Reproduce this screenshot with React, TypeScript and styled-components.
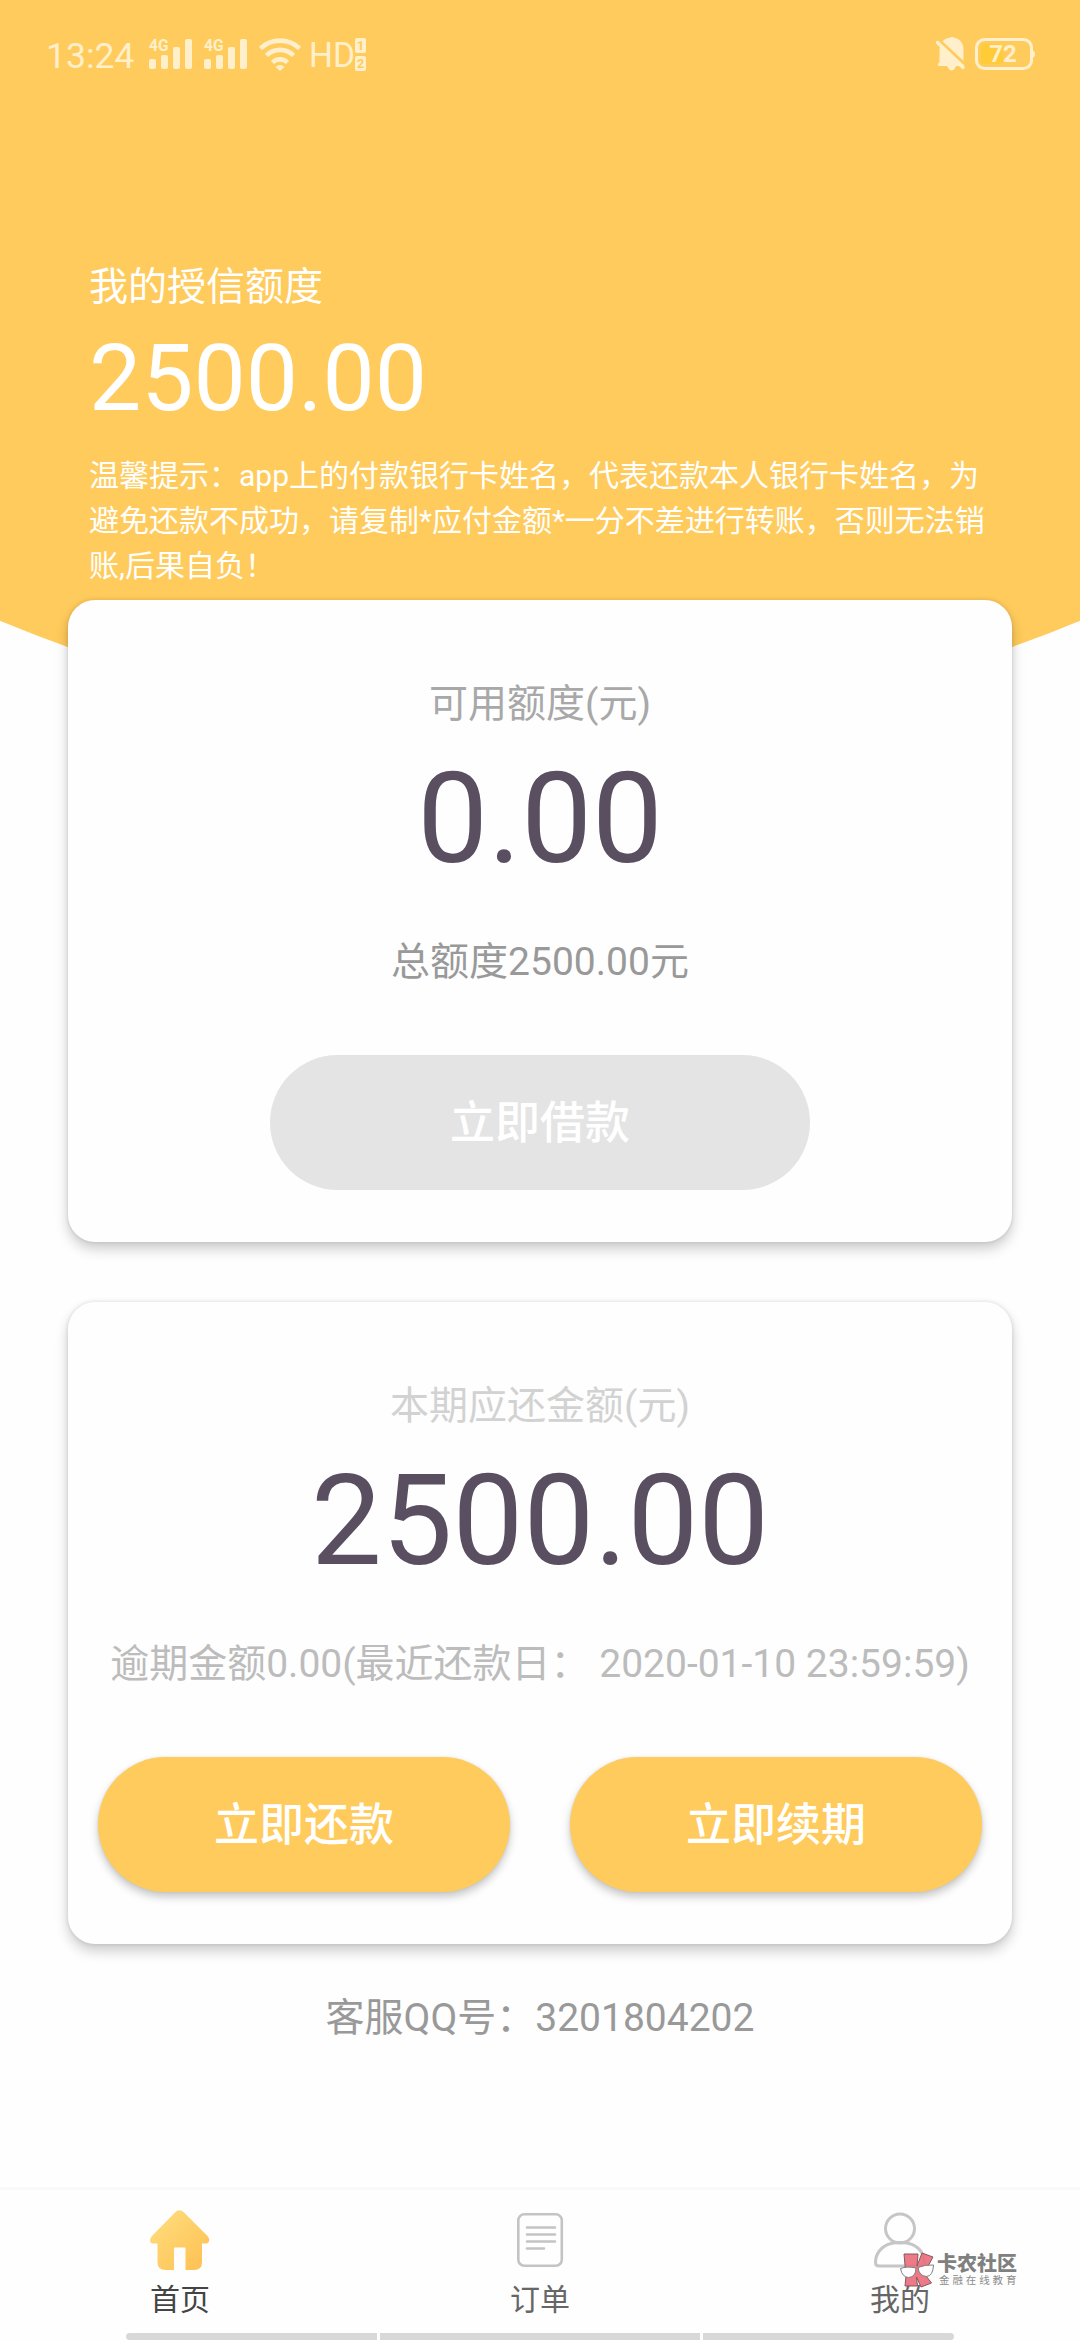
import React from 'react';
import styled, { createGlobalStyle } from 'styled-components';

const Global = createGlobalStyle`
  * { box-sizing: border-box; }
  html, body { margin: 0; padding: 0; background: #fefefe; }
  body { font-family: Roboto, "Noto Sans CJK SC", sans-serif; overflow: hidden; }
`;

const Screen = styled.div`
  width: 1080px;
  height: 2340px;
  display: flex;
  flex-direction: column;
  background: #fefefe;
  overflow: hidden;
`;

const Hero = styled.header`
  flex: none;
  height: 729px;
  background: #ffcb5c;
  clip-path: circle(1400px at 50% -671px);
  color: #fff;
`;

const StatusBar = styled.div`
  display: flex;
  justify-content: space-between;
  height: 106px;
  padding: 0 45px 0 46px;
  color: #fff0cb;
`;

const StatusGroup = styled.div`
  display: flex;
  align-items: flex-start;
`;

const Clock = styled.span`
  width: 90px;
  margin-top: 35px;
  font-size: 35.5px;
  line-height: 42px;
  white-space: nowrap;
`;

const StatusIcons = styled.svg`
  display: block;
  flex: none;
`;

const HeroBody = styled.div`
  padding: 152px 89px 0;
`;

const HeroLabel = styled.div`
  font-size: 39px;
  line-height: 58px;
`;

const HeroAmount = styled.div`
  font-size: 93px;
  line-height: 109px;
  margin-top: 8px;
`;

const HeroTip = styled.p`
  margin: 20px 0 0;
  width: 905px;
  font-size: 30px;
  line-height: 45px;
`;

const Main = styled.main`
  position: relative;
  flex: 1;
  display: flex;
  flex-direction: column;
  gap: 60px;
  margin-top: -129px;
  padding: 0 68px;
`;

const Card = styled.section`
  height: 642px;
  flex: none;
  display: flex;
  flex-direction: column;
  align-items: center;
  padding-top: 75px;
  border-radius: 27px;
  background: #fefefe;
  box-shadow: 0 7px 13px rgba(0, 0, 0, 0.2), 0 0 4px rgba(0, 0, 0, 0.12);
`;

const CardTitle = styled.h2<{ $color: string }>`
  margin: 0;
  font-size: 39px;
  font-weight: 400;
  line-height: 58px;
  color: ${(p) => p.$color};
`;

const CardAmount = styled.div`
  margin-top: 11px;
  font-size: 126px;
  line-height: 151px;
  color: #594f61;
`;

const CardNote = styled.div<{ $color: string }>`
  margin-top: 38px;
  font-size: 39px;
  line-height: 58px;
  white-space: pre;
  color: ${(p) => p.$color};
`;

const Actions = styled.div`
  display: flex;
  gap: 60px;
  margin-top: 64px;
`;

const PillButton = styled.button<{ $width: number; $disabled?: boolean }>`
  width: ${(p) => p.$width}px;
  height: 135px;
  padding: 3px 0 0;
  border: 0;
  border-radius: 68px;
  background: ${(p) => (p.$disabled ? '#e4e4e4' : '#ffcb5c')};
  box-shadow: ${(p) =>
    p.$disabled ? 'none' : '0 5px 8px rgba(0, 0, 0, 0.22), 0 0 3px rgba(0, 0, 0, 0.08)'};
  color: #fff;
  font: 500 45px/66px Roboto, "Noto Sans CJK SC", sans-serif;
`;

const Support = styled.div`
  margin-top: -15px;
  text-align: center;
  font-size: 39px;
  line-height: 58px;
  color: #999;
`;

const TabBar = styled.nav`
  position: relative;
  flex: none;
  height: 153px;
  display: grid;
  grid-template-columns: repeat(3, 1fr);
  border-top: 3px solid #f9f9f9;
`;

const Tab = styled.div<{ $active?: boolean }>`
  display: flex;
  flex-direction: column;
  align-items: center;
  padding-top: 17px;
  font-size: 30px;
  line-height: 44px;
  color: ${(p) => (p.$active ? '#444' : '#666')};
`;

const TabIcon = styled.svg`
  display: block;
  margin-bottom: 5px;
`;

const GestureBar = styled.div`
  position: absolute;
  left: 126px;
  bottom: 0;
  width: 828px;
  height: 7px;
  display: flex;
  gap: 3px;
  border-radius: 4px;
  overflow: hidden;
`;

const GestureSegment = styled.span<{ $grow: number }>`
  flex: ${(p) => p.$grow} 1 0;
  background: #d8d8d8;
`;

const Watermark = styled.div`
  position: absolute;
  left: 899px;
  top: 61px;
  display: flex;
  align-items: flex-start;
  gap: 2px;
`;

const WatermarkText = styled.div`
  display: flex;
  flex-direction: column;
  padding-top: 2px;
  white-space: nowrap;
`;

const WatermarkName = styled.span`
  font-size: 20px;
  font-weight: 900;
  line-height: 22px;
  color: #808080;
`;

const WatermarkSlogan = styled.span`
  padding-left: 2px;
  font-size: 10.5px;
  line-height: 12px;
  letter-spacing: 2.9px;
  color: #8c8c8c;
`;

function SignalBars({ x }: { x: number }) {
  return (
    <g transform={`translate(${x} 0)`}>
      <text x="0" y="51" fontSize="16" fontWeight="700" textLength="19.5" lengthAdjust="spacingAndGlyphs">4G</text>
      <rect x="0" y="59" width="7" height="10" rx="2" />
      <rect x="12" y="55" width="7" height="14" rx="2" />
      <rect x="24" y="47" width="7" height="22" rx="2" />
      <rect x="36" y="39" width="7" height="30" rx="2" />
    </g>
  );
}

function ConnectivityIcons() {
  return (
    <StatusIcons width="236" height="90" viewBox="136 0 236 90" fill="currentColor" fontFamily="Roboto">
      <SignalBars x={149} />
      <SignalBars x={204} />
      <g fill="none" stroke="currentColor" strokeWidth="4.6">
        <path d="M260.500 48.500A28 28 0 0 1 299.500 48.500" />
        <path d="M266.500 55.500A19 19 0 0 1 293.500 55.500" />
        <path d="M272.500 62.500A10.500 10.500 0 0 1 287.500 62.500" />
      </g>
      <path d="M275.500 67q4.500-4 9 0l-4.500 4z" />
      <text x="309" y="67" fontSize="35.500" textLength="46" lengthAdjust="spacingAndGlyphs">HD</text>
      <rect x="355" y="38" width="11" height="15" rx="2" />
      <rect x="355" y="56" width="11" height="15" rx="2" />
      <g fill="#ffcb5c" fontSize="12.500" fontWeight="700" textAnchor="middle">
        <text x="360.500" y="50">1</text>
        <text x="360.500" y="68">2</text>
      </g>
    </StatusIcons>
  );
}

function AlertAndBattery() {
  return (
    <StatusIcons width="100" height="90" viewBox="935 0 100 90" fill="currentColor" fontFamily="Roboto">
      <path d="M939.500 62V50C940 42 944 38.500 949 38Q952 36 955 38C960 39 963.500 43 963.500 50V62L965 66H956Q952 75 947 66H938.500Q937 64 939.500 62Z" />
      <path d="M939 40L967 66" stroke="#ffcb5c" strokeWidth="3" />
      <path d="M937.500 42.500L963 67.500" stroke="currentColor" strokeWidth="3.500" strokeLinecap="round" />
      <rect x="976.500" y="39.500" width="55" height="29" rx="8" fill="none" stroke="currentColor" strokeWidth="3" />
      <rect x="981" y="44" width="22" height="20" rx="3" fill="#ffcc38" />
      <path d="M1032 50q3 1 3 4t-3 4z" />
      <text x="1003" y="62" fontSize="24" fontWeight="700" textAnchor="middle">72</text>
    </StatusIcons>
  );
}

function HomeIcon() {
  return (
    <TabIcon width="66" height="66" viewBox="0 0 66 66">
      <defs>
        <linearGradient id="home" x1="0" y1="0" x2="1" y2="1">
          <stop offset="0" stopColor="#ffdf80" />
          <stop offset="1" stopColor="#fdbf50" />
        </linearGradient>
      </defs>
      <path fill="url(#home)" d="M28 5.500Q32.500 1 37 5.500L60.500 29C64 33 61.500 36.500 59.500 36.500H55V55Q55 63 47 63H38.500V41.500Q38.500 40.500 37.500 40.500H28Q27 40.500 27 41.500V63H18.500Q10.500 63 10.500 55V36.500H5.500C3.500 36.500 1.500 33 5 29Z" />
    </TabIcon>
  );
}

function OrdersIcon() {
  return (
    <TabIcon width="66" height="66" viewBox="0 0 66 66" fill="none" stroke="#c4c4c4" strokeWidth="2.600" strokeLinecap="round">
      <rect x="11.300" y="7.300" width="43.500" height="51.500" rx="6" />
      <path d="M20 20.500H48M20 27.500H48M20 34.500H48M20 41.500H37" />
    </TabIcon>
  );
}

function ProfileIcon() {
  return (
    <TabIcon width="66" height="66" viewBox="0 0 66 66" fill="none" stroke="#c6c6c6" strokeWidth="3">
      <circle cx="33" cy="21.500" r="14.500" />
      <path d="M24 36.500C14 39 8.500 47 8.500 55.500Q8.500 59 12 59H54Q57.500 59 57.500 55.500C57.500 47 52 39 42 36.500Q33 34.500 24 36.500Z" />
    </TabIcon>
  );
}

function WatermarkLogo() {
  return (
    <svg width="36" height="38" viewBox="0 0 36 38">
      <path
        d="M5 3H19L18 15L23 2L34 6L28 17L24 21L32.500 32L22 36L17.500 26L18.500 35H6L7 25Z"
        fill="#ea6f7d"
        fillOpacity="0.92"
        stroke="#85595d"
        strokeWidth="1"
      />
      <g fill="#fff" stroke="#808080" strokeWidth="1">
        <path d="M1.500 17.500Q8 15 17 17Q17 26 9.500 26.500Q3 26 1.500 17.500Z" />
        <path d="M19 16.500Q26 13.500 34.500 14Q34 25 27.500 25.500Q20 25 19 16.500Z" />
      </g>
    </svg>
  );
}

export default function App() {
  return (
    <Screen>
      <Global />
      <Hero>
        <StatusBar>
          <StatusGroup>
            <Clock>13:24</Clock>
            <ConnectivityIcons />
          </StatusGroup>
          <AlertAndBattery />
        </StatusBar>
        <HeroBody>
          <HeroLabel>我的授信额度</HeroLabel>
          <HeroAmount>2500.00</HeroAmount>
          <HeroTip>
            温馨提示：app上的付款银行卡姓名，代表还款本人银行卡姓名，为<br />
            避免还款不成功，请复制*应付金额*一分不差进行转账，否则无法销<br />
            账,后果自负！
          </HeroTip>
        </HeroBody>
      </Hero>
      <Main>
        <Card>
          <CardTitle $color="#a8a8a8">可用额度(元)</CardTitle>
          <CardAmount>0.00</CardAmount>
          <CardNote $color="#999">总额度2500.00元</CardNote>
          <Actions>
            <PillButton $width={540} $disabled>立即借款</PillButton>
          </Actions>
        </Card>
        <Card>
          <CardTitle $color="#d2d2d2">本期应还金额(元)</CardTitle>
          <CardAmount>2500.00</CardAmount>
          <CardNote $color="#bcbcbc">逾期金额0.00(最近还款日： 2020-01-10 23:59:59)</CardNote>
          <Actions>
            <PillButton $width={412}>立即还款</PillButton>
            <PillButton $width={412}>立即续期</PillButton>
          </Actions>
        </Card>
        <Support>客服QQ号：3201804202</Support>
      </Main>
      <TabBar>
        <Tab $active>
          <HomeIcon />
          首页
        </Tab>
        <Tab>
          <OrdersIcon />
          订单
        </Tab>
        <Tab>
          <ProfileIcon />
          我的
        </Tab>
        <Watermark>
          <WatermarkLogo />
          <WatermarkText>
            <WatermarkName>卡农社区</WatermarkName>
            <WatermarkSlogan>金融在线教育</WatermarkSlogan>
          </WatermarkText>
        </Watermark>
        <GestureBar>
          <GestureSegment $grow={251} />
          <GestureSegment $grow={320} />
          <GestureSegment $grow={251} />
        </GestureBar>
      </TabBar>
    </Screen>
  );
}
